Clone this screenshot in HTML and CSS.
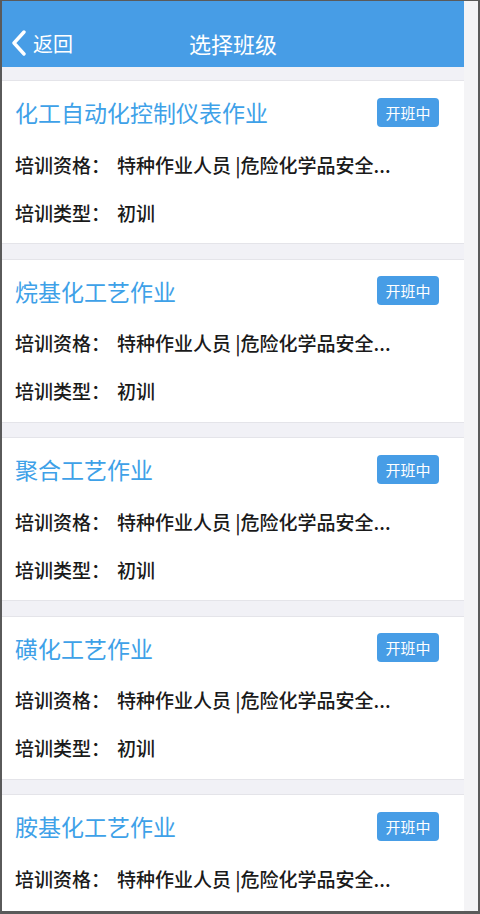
FILE: index.html
```html
<!doctype html>
<html>
<head>
<meta charset="utf-8">
<link rel="stylesheet" href="styles.css">
</head>
<body>
<div class="frame">
<div class="app">
	<div class="nav">
		<div class="back">
			<svg width="16" height="26" viewBox="0 0 16 26"><polyline points="13,2 3,13 13,24" fill="none" stroke="#fff" stroke-width="3.4" stroke-linecap="round" stroke-linejoin="round"/></svg>
			<span>返回</span>
		</div>
		<div class="title">选择班级</div>
	</div>
	<div class="list">
		<div class="card">
			<div class="head"><span class="name">化工自动化控制仪表作业</span><span class="badge">开班中</span></div>
			<div class="row"><span class="label">培训资格：</span>特种作业人员 |危险化学品安全...</div>
			<div class="row"><span class="label">培训类型：</span>初训</div>
		</div>
		<div class="card">
			<div class="head"><span class="name">烷基化工艺作业</span><span class="badge">开班中</span></div>
			<div class="row"><span class="label">培训资格：</span>特种作业人员 |危险化学品安全...</div>
			<div class="row"><span class="label">培训类型：</span>初训</div>
		</div>
		<div class="card">
			<div class="head"><span class="name">聚合工艺作业</span><span class="badge">开班中</span></div>
			<div class="row"><span class="label">培训资格：</span>特种作业人员 |危险化学品安全...</div>
			<div class="row"><span class="label">培训类型：</span>初训</div>
		</div>
		<div class="card">
			<div class="head"><span class="name">磺化工艺作业</span><span class="badge">开班中</span></div>
			<div class="row"><span class="label">培训资格：</span>特种作业人员 |危险化学品安全...</div>
			<div class="row"><span class="label">培训类型：</span>初训</div>
		</div>
		<div class="card">
			<div class="head"><span class="name">胺基化工艺作业</span><span class="badge">开班中</span></div>
			<div class="row"><span class="label">培训资格：</span>特种作业人员 |危险化学品安全...</div>
			<div class="row"><span class="label">培训类型：</span>初训</div>
		</div>
	</div>
</div>
</div>
</body>
</html>
```

FILE: styles.css
```css
body{
	margin:0;
	font-family:"Noto Sans CJK SC","Noto Sans",sans-serif;
}
.frame{
	height:914px;
	box-sizing:border-box;
	border:2px solid #5a5a5a;
	border-top-width:1px;
	border-bottom-width:3px;
	background:#f4f4f6;
	overflow:hidden;
}
.app{
	width:462px;
	height:100%;
	background:#f1f1f6;
	overflow:hidden;
}
.nav{
	height:66px;
	box-sizing:border-box;
	padding-top:18px;
	background:#479de6;
	color:#fff;
	display:flex;
	align-items:center;
	position:relative;
}
.back{
	display:flex;
	align-items:center;
	gap:6px;
	padding-left:9px;
	font-size:20px;
}
.title{
	position:absolute;
	left:0;
	right:0;
	bottom:0;
	top:18px;
	display:flex;
	align-items:center;
	justify-content:center;
	font-size:22px;
	pointer-events:none;
}
.list{
	padding-top:13px;
}
.card{
	background:#fff;
	border-top:1px solid #e4e4e9;
	border-bottom:1px solid #e4e4e9;
	height:164px;
	box-sizing:border-box;
	padding:13px 25px 0 13px;
	margin-bottom:14.5px;
}
.head{
	height:36px;
	display:flex;
	align-items:center;
	justify-content:space-between;
	margin-bottom:10px;
}
.name{
	color:#3ea1e8;
	font-size:23px;
}
.badge{
	background:#479de6;
	color:#fff;
	font-size:15px;
	width:62px;
	height:29px;
	line-height:29px;
	text-align:center;
	border-radius:4px;
}
.row{
	height:48px;
	display:flex;
	align-items:center;
	font-size:19px;
	font-weight:500;
	color:#1a1a1a;
	white-space:pre;
}
.label{
	width:102px;
	flex:none;
	color:#1a1a1a;
}
```
